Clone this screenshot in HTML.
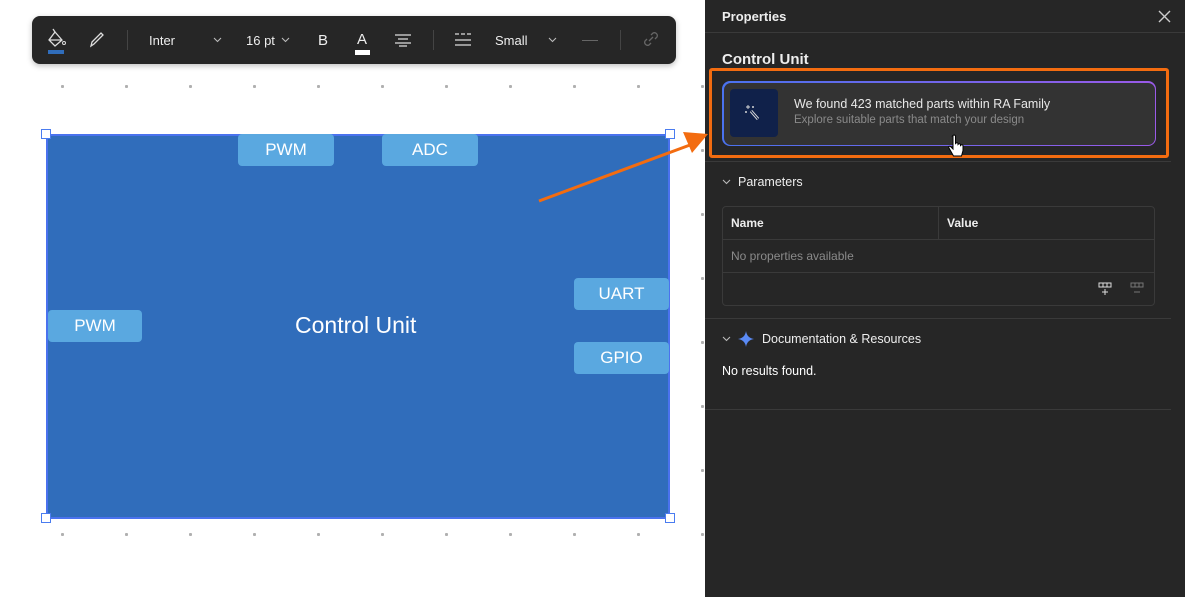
<!DOCTYPE html>
<html><head><meta charset="utf-8"><style>
*{margin:0;padding:0;box-sizing:border-box}
body{width:1185px;height:597px;overflow:hidden;background:#fff;font-family:"Liberation Sans",sans-serif;position:relative}
.abs{position:absolute}
.dot{position:absolute;width:3px;height:3px;background:#b0b0b0;border-radius:1px}
.tb{left:32px;top:16px;width:644px;height:48px;background:#262626;border-radius:8px;box-shadow:0 2px 6px rgba(0,0,0,.25);color:#eee;font-size:13px}
.tb .t{position:absolute;top:17px}
.rect{left:46px;top:134px;width:624px;height:385px;background:#306dbb;border:2px solid #4a72ee}
.h{position:absolute;width:10px;height:10px;background:#fff;border:1.5px solid #4a7cf0}
.pin{position:absolute;height:32px;width:96px;background:#5aa8e0;border-radius:4px;color:#fff;font-size:17px;text-align:center;line-height:32px}
.panel{left:705px;top:0;width:480px;height:597px;background:#262626;color:#eee}
.sep{position:absolute;left:0;width:466px;height:1px;background:#3a3a3a}
</style></head><body>
<div class="dot" style="left:61px;top:85px"></div><div class="dot" style="left:125px;top:85px"></div><div class="dot" style="left:189px;top:85px"></div><div class="dot" style="left:253px;top:85px"></div><div class="dot" style="left:317px;top:85px"></div><div class="dot" style="left:381px;top:85px"></div><div class="dot" style="left:445px;top:85px"></div><div class="dot" style="left:509px;top:85px"></div><div class="dot" style="left:573px;top:85px"></div><div class="dot" style="left:637px;top:85px"></div><div class="dot" style="left:701px;top:85px"></div>
<div class="dot" style="left:61px;top:533px"></div><div class="dot" style="left:125px;top:533px"></div><div class="dot" style="left:189px;top:533px"></div><div class="dot" style="left:253px;top:533px"></div><div class="dot" style="left:317px;top:533px"></div><div class="dot" style="left:381px;top:533px"></div><div class="dot" style="left:445px;top:533px"></div><div class="dot" style="left:509px;top:533px"></div><div class="dot" style="left:573px;top:533px"></div><div class="dot" style="left:637px;top:533px"></div><div class="dot" style="left:701px;top:533px"></div>
<div class="dot" style="left:701px;top:149px"></div><div class="dot" style="left:701px;top:213px"></div><div class="dot" style="left:701px;top:277px"></div><div class="dot" style="left:701px;top:341px"></div><div class="dot" style="left:701px;top:405px"></div><div class="dot" style="left:701px;top:469px"></div>

<div class="abs tb">
 <svg class="abs" style="left:14px;top:12px" width="22" height="28" viewBox="0 0 22 28"><path d="M9 4 L3 12 L9 18 L16 12 Z M3 12 H16" fill="none" stroke="#ddd" stroke-width="1.3"/><path d="M9 4 L7 1" stroke="#ddd" stroke-width="1.3"/><circle cx="18" cy="15" r="1.5" fill="none" stroke="#ddd"/><rect x="2" y="22" width="16" height="4" fill="#306dbb"/></svg>
 <svg class="abs" style="left:56px;top:14px" width="18" height="20" viewBox="0 0 18 20"><path d="M3 16 L4 12 L13 3 L15 5 L6 14 Z" fill="none" stroke="#ddd" stroke-width="1.3"/></svg>
 <div class="abs" style="left:95px;top:14px;width:1px;height:20px;background:#444"></div>
 <div class="t" style="left:117px">Inter</div>
 <svg class="abs" style="left:181px;top:21px" width="9" height="6"><path d="M1 1L4.5 4.5L8 1" fill="none" stroke="#bbb" stroke-width="1.1"/></svg>
 <div class="t" style="left:214px">16 pt</div>
 <svg class="abs" style="left:249px;top:21px" width="9" height="6"><path d="M1 1L4.5 4.5L8 1" fill="none" stroke="#bbb" stroke-width="1.1"/></svg>
 <div class="t" style="left:286px;font-size:15px;top:16px">B</div>
 <div class="t" style="left:325px;font-size:15px;top:15px">A</div>
 <div class="abs" style="left:323px;top:34px;width:15px;height:5px;background:#fff"></div>
 <svg class="abs" style="left:362px;top:17px" width="18" height="14"><path d="M1 2H17M4 6H14M1 10H17M5 13H13" stroke="#ddd" stroke-width="1.2"/></svg>
 <div class="abs" style="left:401px;top:14px;width:1px;height:20px;background:#444"></div>
 <svg class="abs" style="left:422px;top:16px" width="18" height="16"><path d="M1 2H5M7 2H11M13 2H17M1 8H17M1 13H17" stroke="#ddd" stroke-width="1.3"/></svg>
 <div class="t" style="left:463px">Small</div>
 <svg class="abs" style="left:516px;top:21px" width="9" height="6"><path d="M1 1L4.5 4.5L8 1" fill="none" stroke="#bbb" stroke-width="1.1"/></svg>
 <div class="abs" style="left:550px;top:24px;width:16px;height:1px;background:#666"></div>
 <div class="abs" style="left:588px;top:14px;width:1px;height:20px;background:#444"></div>
 <svg class="abs" style="left:610px;top:14px" width="18" height="18" viewBox="0 0 18 18"><path d="M7 11 L11 7 M5 9 L3 11 a3 3 0 0 0 4 4 L9 13 M13 9 L15 7 a3 3 0 0 0 -4 -4 L9 5" fill="none" stroke="#666" stroke-width="1.3"/></svg>
</div>

<div class="abs rect"></div>
<div class="h" style="left:41px;top:129px"></div><div class="h" style="left:665px;top:129px"></div>
<div class="h" style="left:41px;top:513px"></div><div class="h" style="left:665px;top:513px"></div>
<div class="pin" style="left:238px;top:134px">PWM</div>
<div class="pin" style="left:382px;top:134px">ADC</div>
<div class="pin" style="left:48px;top:310px;width:94px">PWM</div>
<div class="pin" style="left:574px;top:278px;width:95px">UART</div>
<div class="pin" style="left:574px;top:342px;width:95px">GPIO</div>
<div class="abs" style="left:295px;top:312px;color:#fff;font-size:23px">Control Unit</div>

<div class="abs panel">
 <div class="abs" style="left:17px;top:9px;font-size:13px;font-weight:bold">Properties</div>
 <svg class="abs" style="left:453px;top:10px" width="13" height="13"><path d="M1 1L12 12M12 1L1 12" stroke="#ccc" stroke-width="1.4"/></svg>
 <div class="sep" style="top:32px;width:480px"></div>
 <div class="abs" style="left:17px;top:51px;font-size:15px;font-weight:bold">Control Unit</div>
 <div class="abs" style="left:17px;top:81px;width:434px;height:65px;border-radius:8px;padding:1.5px;background:linear-gradient(90deg,#4a72ee,#9a5ae8)"><div style="width:100%;height:100%;border-radius:7px;background:#333"></div></div>
 <div class="abs" style="left:25px;top:89px;width:48px;height:48px;border-radius:4px;background:#10214a"></div>
 <svg class="abs" style="left:38px;top:102px" width="22" height="22" viewBox="0 0 22 22"><path d="M8 9 L15 17" stroke="#ddd" stroke-width="3"/><path d="M8 9 L15 17" stroke="#10214a" stroke-width="1"/><path d="M5 3V7M3 5H7M10 4V6M9 5H11M3 9V11M2 10H4" stroke="#ddd" stroke-width="0.9"/></svg>
 <div class="abs" style="left:89px;top:97px;font-size:12.5px;color:#e8e8e8">We found 423 matched parts within RA Family</div>
 <div class="abs" style="left:89px;top:114px;font-size:11.5px;color:#8a8a8a">Explore suitable parts that match your design</div>
 <div class="abs" style="left:4px;top:68px;width:460px;height:90px;border:3px solid #f36c10;border-radius:3px"></div>
 <div class="sep" style="top:161px"></div>
 <svg class="abs" style="left:17px;top:179px" width="9" height="6"><path d="M1 1L4.5 4.5L8 1" fill="none" stroke="#bbb" stroke-width="1.1"/></svg>
 <div class="abs" style="left:33px;top:175px;font-size:12.5px">Parameters</div>
 <div class="abs" style="left:17px;top:206px;width:433px;height:100px;border:1px solid #3a3a3a;border-radius:4px"></div>
 <div class="abs" style="left:17px;top:239px;width:433px;height:1px;background:#3a3a3a"></div>
 <div class="abs" style="left:17px;top:272px;width:433px;height:1px;background:#3a3a3a"></div>
 <div class="abs" style="left:233px;top:207px;width:1px;height:32px;background:#3a3a3a"></div>
 <div class="abs" style="left:26px;top:216px;font-size:12px;font-weight:bold">Name</div>
 <div class="abs" style="left:242px;top:216px;font-size:12px;font-weight:bold">Value</div>
 <div class="abs" style="left:26px;top:249px;font-size:12px;color:#8a8a8a">No properties available</div>
 <svg class="abs" style="left:393px;top:282px" width="14" height="14"><rect x="1" y="1" width="12" height="4" fill="none" stroke="#ddd"/><path d="M5 1V5M9 1V5M7 7V13M4 10H10" stroke="#ddd"/></svg>
 <svg class="abs" style="left:425px;top:282px" width="14" height="14"><rect x="1" y="1" width="12" height="4" fill="none" stroke="#777"/><path d="M5 1V5M9 1V5M4 10H10" stroke="#777"/></svg>
 <div class="sep" style="top:318px"></div>
 <svg class="abs" style="left:17px;top:336px" width="9" height="6"><path d="M1 1L4.5 4.5L8 1" fill="none" stroke="#bbb" stroke-width="1.1"/></svg>
 <svg class="abs" style="left:32px;top:330px" width="18" height="18" viewBox="0 0 18 18"><path d="M9 1 Q10 8 17 9 Q10 10 9 17 Q8 10 1 9 Q8 8 9 1Z" fill="#5a8af5"/></svg>
 <div class="abs" style="left:57px;top:332px;font-size:12.5px">Documentation &amp; Resources</div>
 <div class="abs" style="left:17px;top:364px;font-size:12.5px;color:#fff">No results found.</div>
 <div class="sep" style="top:409px"></div>
</div>

<svg class="abs" style="left:0;top:0" width="1185" height="597"><path d="M539 201 L690 145" stroke="#f36c10" stroke-width="3"/><path d="M708 134 L683 132 L692 153 Z" fill="#f36c10"/>
<path d="M953 136 v13 l-2.5 -2.5 q-2.5 -1 -1.5 1.5 l4.5 8 h8 l1.5-5.5 v-5 q-1-1.5-2.5 0 v-1 q-1-1.5-2.5 0 v-1 q-1-1.5-2.5 0 v-7.5 q-1.2-2-3 0z" fill="#fff" stroke="#000" stroke-width="1"/></svg>
</body></html>
